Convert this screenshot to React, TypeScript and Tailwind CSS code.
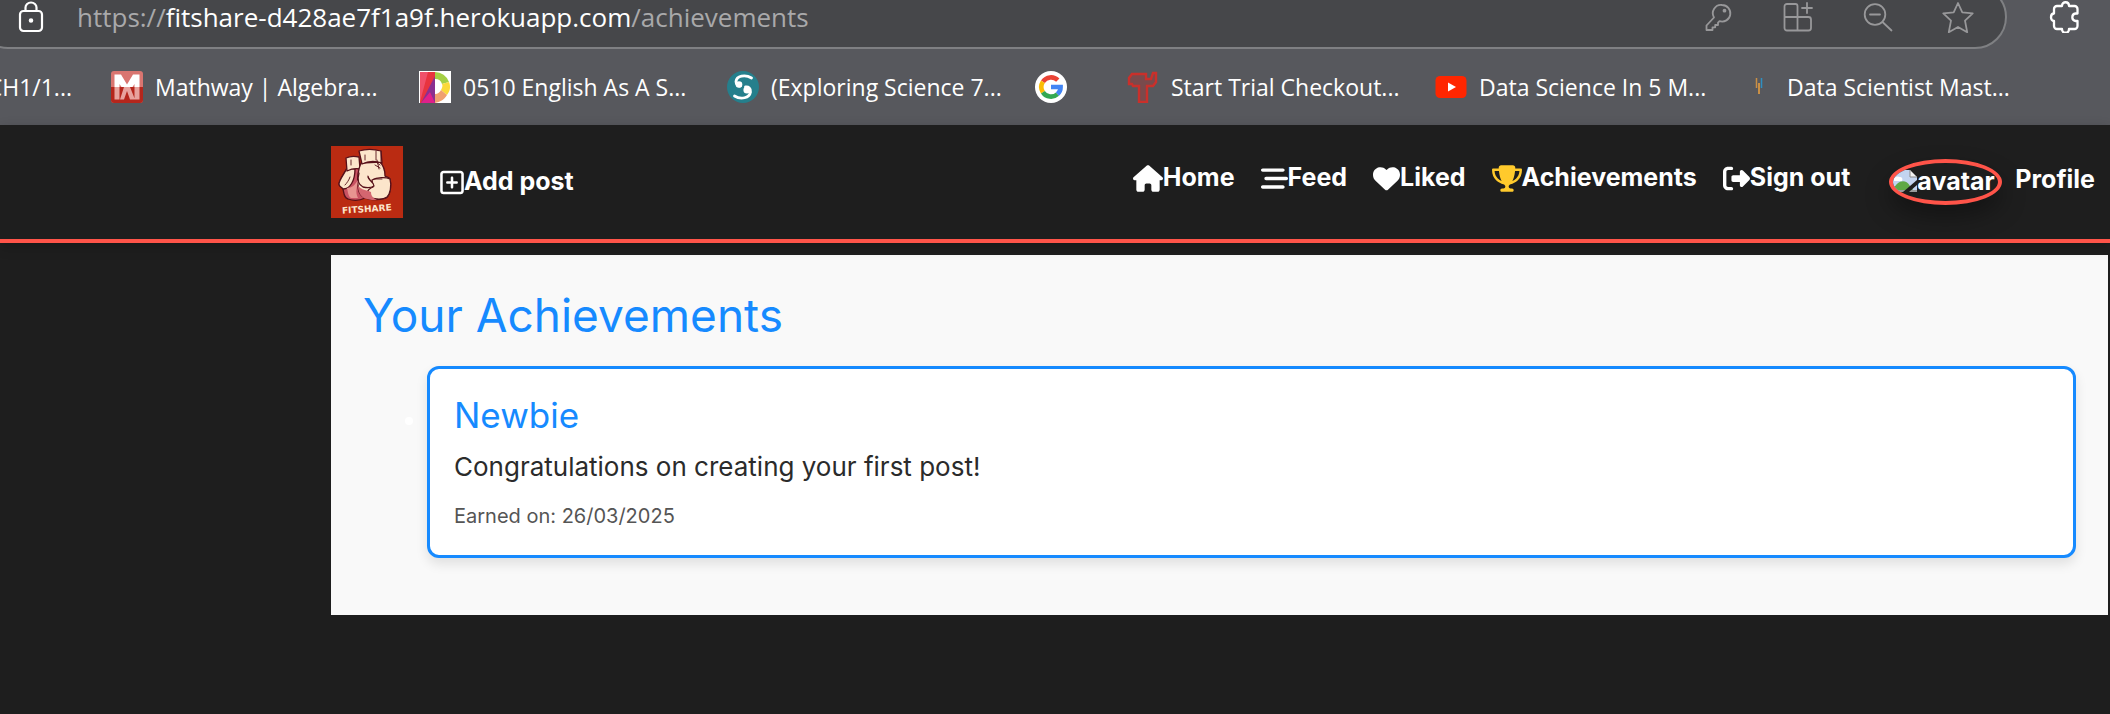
import type { ReactNode } from 'react';
import {
  FaBarsStaggered,
  FaHeart,
  FaHouse,
  FaRegSquarePlus,
  FaRightFromBracket,
  FaTrophy,
} from 'react-icons/fa6';

const stroke = {
  viewBox: '0 0 32 32',
  fill: 'none',
  stroke: 'currentColor',
  strokeWidth: 1.8,
  strokeLinejoin: 'round' as const,
  strokeLinecap: 'round' as const,
  className: 'size-8',
  'aria-hidden': true,
};

function LockIcon() {
  return (
    <svg {...stroke} strokeWidth={2.2}>
      <rect x="5" y="10" width="22" height="20" rx="3.5" />
      <path d="M10.500 10V6.500a5.500 5 0 0 1 11 0V10" />
      <circle cx="16" cy="19.500" r="1.200" fill="currentColor" />
    </svg>
  );
}

function KeyIcon() {
  return (
    <svg {...stroke}>
      <path d="M20 4a8.300 8.300 0 1 1-2.500 16.200L16 21.700V24h-2.800v2.300h-2.700V29H4.500v-4.500L12 16.500A8.300 8.300 0 0 1 20 4z" />
      <circle cx="22.500" cy="9.700" r="1" fill="currentColor" />
    </svg>
  );
}

function AppsAddIcon() {
  return (
    <svg {...stroke}>
      <path d="M5 3h8.500a2 2 0 0 1 2 2v11h11a2.500 2.500 0 0 1 2.500 2.500V27a2.500 2.500 0 0 1-2.500 2.500H5A2.500 2.500 0 0 1 2.500 27V5.500A2.500 2.500 0 0 1 5 3zM15.500 16v13.500M2.500 16h13M25 2v10M20 7h10" />
    </svg>
  );
}

function ZoomOutIcon() {
  return (
    <svg {...stroke}>
      <circle cx="13" cy="13.500" r="10.300" />
      <path d="M8 13.500h10M20.500 21l9 8.500" />
    </svg>
  );
}

function StarIcon() {
  return (
    <svg {...stroke}>
      <path d="M16 2l4.300 9.400 10.400 1-7.700 7.200 2.200 11.600L16 26l-9.200 5.200L9 19.600l-7.700-7.200 10.400-1z" />
    </svg>
  );
}

function PuzzleIcon() {
  return (
    <svg {...stroke} strokeWidth={2.3}>
      <path d="M8 5h5c0-5 7-5 7 0h5.500a3 3 0 0 1 3 3v4.500h-2a3.800 3.800 0 0 0 0 7.500h2v5a3 3 0 0 1-3 3H20c0 5-7 5-7 0H8a3 3 0 0 1-3-3v-5c-4 0-4-7.500 0-7.500V8a3 3 0 0 1 3-3z" />
    </svg>
  );
}

function MathwayIcon() {
  return (
    <svg viewBox="0 0 32 32" className="size-8" aria-hidden>
      <rect width="32" height="32" rx="3" fill="#d97570" />
      <path d="M0 16h32v13a3 3 0 0 1-3 3H3a3 3 0 0 1-3-3z" fill="#b5261c" />
      <path d="M3.500 16V3.500H10l6 10 6-10h6.500V16h-5v-3l-2 3h-11l-2-3v3z" fill="#fff" />
      <path d="M3.500 16h5v12.500h-5zM23.500 16h5v12.500h-5zM13 16h6l5 12.500h-5L16 20l-3 8.500H9z" fill="#e8a29d" />
    </svg>
  );
}

function EnglishIcon() {
  return (
    <svg viewBox="0 0 32 32" className="size-8" aria-hidden>
      <rect width="32" height="32" fill="#fff" />
      <path d="M1 1h15v31H1z" fill="#e8333f" />
      <path d="M1 31L9 1H1z" fill="#f0506a" />
      <path d="M16 5v27H2z" fill="#8a2f90" />
      <path d="M2 32l9-11 5 11z" fill="#e0208a" />
      <path d="M16 1a15 15 0 0 1 14 10l-7 2a7 7 0 0 0-7-5z" fill="#a5cf45" />
      <path d="M30 11c2 5 1 9-2 13l-6-5c1-2 2-4 1-6z" fill="#fbd93a" />
      <path d="M22 19l6 5c-3 5-7 7-12 8v-9c3 0 5-2 6-4z" fill="#f0a070" />
    </svg>
  );
}

function ScienceIcon() {
  return (
    <svg viewBox="0 0 32 32" className="size-8" aria-hidden>
      <circle cx="16" cy="16" r="16" fill="#257f8c" />
      <path
        d="M24.500 7C18 3 9.500 5 9 10.500c0 3 2 5 4.500 4.500M7.500 25c6.500 4 15 2 16-4 .5-3.500-2-5.500-5-5"
        fill="none"
        stroke="#fff"
        strokeWidth="2.800"
        strokeLinecap="round"
      />
      <circle cx="12" cy="13.500" r="3.300" fill="#fff" />
      <circle cx="20" cy="19" r="3.600" fill="#fff" />
    </svg>
  );
}

function GoogleIcon() {
  return (
    <svg viewBox="0 0 32 32" className="size-8" aria-hidden>
      <circle cx="16" cy="16" r="16" fill="#fff" />
      <g fill="none" strokeWidth="4.600">
        <path d="M22.800 9.200A9.600 9.600 0 0 0 7.900 10.800" stroke="#ea4335" />
        <path d="M7.900 10.800a9.600 9.600 0 0 0 0 10.400" stroke="#fbbc05" />
        <path d="M7.900 21.200a9.600 9.600 0 0 0 14.600 1.900" stroke="#34a853" />
        <path d="M22.500 23.100A9.600 9.600 0 0 0 25.600 16H16" stroke="#4285f4" />
      </g>
    </svg>
  );
}

function TrialIcon() {
  return (
    <svg viewBox="0 0 32 32" className="size-8" aria-hidden>
      <path
        d="M5 3h14v5h5l2-6h3v9l-3 4h-6v16h-8V15H6l-1-2H2V7z"
        fill="#7a4a4c"
        stroke="#c9302b"
        strokeWidth="2.400"
      />
    </svg>
  );
}

function VideoIcon() {
  return (
    <svg viewBox="0 0 32 32" className="size-8" aria-hidden>
      <rect x="0.500" y="5" width="31" height="22" rx="4.500" fill="#ff2600" />
      <path d="M13 11.500v9l8-4.500z" fill="#fff" />
    </svg>
  );
}

function BarsIcon() {
  return (
    <svg viewBox="0 0 32 32" className="size-8" aria-hidden>
      <path d="M13.500 7v10" stroke="#c98f45" strokeWidth="1.500" />
      <path d="M18.500 7v10" stroke="#2f8fc0" strokeWidth="1.500" />
      <path d="M16 12v11" stroke="#c98f45" strokeWidth="2" />
    </svg>
  );
}

function FitshareLogo() {
  return (
    <svg viewBox="0 0 72 72" className="size-[72px]" role="img" aria-label="Fitshare logo">
      <rect width="72" height="72" fill="#ba2b12" />
      <g stroke="#571019" strokeWidth="1.300" strokeLinejoin="round" strokeLinecap="round">
        <path
          d="M16 22c-2 5-8 12-8 16 0 3 3 3 4 5 1 5 1 9 5 10 6 2 13 1 17-1V24l-5-4z"
          fill="#c95262"
        />
        <path d="M16 22c-2 5-8 12-8 16 0 3 3 3 4 5 7 0 12-8 12-20z" fill="#fce5cb" />
        <path d="M15 12c4-2 9-2 13-1l1 12c-5-1-9 0-13 2z" fill="#fce5cb" />
        <path
          d="M30 17c-3 7-4 14-3 22 0 8 4 13 11 14 8 1 16 1 19-3 3-4 3-12 2-17-1-2-4-2-5-3 0-6-2-11-5-14z"
          fill="#fce5cb"
        />
        <path d="M28 5c6-2 15-2 22 0l1 12c-6-2-14-2-20 1z" fill="#fce5cb" />
        <path d="M41 34c5-3 14-3 18-1 2 7 0 15-3 18-4 3-12 2-17 1-4-4-4-8 3-11z" fill="#fce5cb" />
        <path d="M28 27c-2 7 0 12 4 14 4 1 8 1 11-1 0-4-5-5-6-9" fill="#fce5cb" />
        <path d="M40 46c-5-2-9-2-13-6 0 6 3 12 9 13 3 1 7 1 10 1-4-2-6-4-6-8z" fill="#d46670" stroke="none" />
        <path d="M16 42c1 4 1 8 4 10l7 0c-3-6-1-10 0-18-3 5-6 8-11 8z" fill="#e89490" stroke="none" />
        <path
          d="M19 31c-1 3-3 6-5 8M37 30c1 3 2 5 4 6M45 16l4 3M44 19l5 3M46 14l2 9M34 9v5M45 5v9M50 5v12M20 14v5M43 33h8"
          fill="none"
          strokeWidth="0.900"
        />
      </g>
      <text
        x="36"
        y="66"
        transform="rotate(-4 36 66)"
        textAnchor="middle"
        fill="#fce5cb"
        fontSize="9"
        fontWeight="900"
        fontFamily="DejaVu Sans, sans-serif"
      >
        FITSHARE
      </text>
    </svg>
  );
}

function BrokenImageIcon() {
  return (
    <svg viewBox="0 0 24 24" className="mb-1 size-6 shrink-0" aria-hidden>
      <path d="M0 2h17l7 7v15H0z" fill="#c3d4f0" />
      <path d="M17 2v7h7z" fill="#f2f2f2" stroke="#8a8a8a" />
      <path d="M1 11c1-3 4-3 6-2 2 0 3 2 2 4H1z" fill="#fff" />
      <path d="M0 22c4-9 12-12 17-4l3 4z" fill="#5fa845" />
      <path d="M0 23h24" stroke="#999" strokeWidth="2" />
      <path d="M10 24L24 12v5l-8 7z" fill="#1e1e1e" />
    </svg>
  );
}

type Bookmark = { label: string; icon: ReactNode };

const bookmarks: Bookmark[] = [
  { label: 'Mathway | Algebra...', icon: <MathwayIcon /> },
  { label: '0510 English As A S...', icon: <EnglishIcon /> },
  { label: '(Exploring Science 7...', icon: <ScienceIcon /> },
  { label: '', icon: <GoogleIcon /> },
  { label: 'Start Trial Checkout...', icon: <TrialIcon /> },
  { label: 'Data Science In 5 M...', icon: <VideoIcon /> },
  { label: 'Data Scientist Mast...', icon: <BarsIcon /> },
];

function BrowserBar() {
  return (
    <div className="overflow-hidden bg-[#57585d] font-['Open_Sans','Noto_Sans',sans-serif] text-white">
      <div className="flex">
        <div className="-mt-[15px] -ml-6 flex h-16 min-w-0 grow items-center rounded-full border-2 border-[#7f8083] bg-[#46474a] pr-[31px] pl-[37px]">
          <button type="button" aria-label="Site information">
            <LockIcon />
          </button>
          <div className="ml-[30px] min-w-0 grow text-[26px] leading-9 whitespace-nowrap text-[#a9a9aa]">
            https://<span className="text-white">fitshare-d428ae7f1a9f.herokuapp.com</span>/achievements
          </div>
          <div className="flex gap-12 text-[#98989a]">
            <button type="button" aria-label="Passwords">
              <KeyIcon />
            </button>
            <button type="button" aria-label="Install app">
              <AppsAddIcon />
            </button>
            <button type="button" aria-label="Zoom out">
              <ZoomOutIcon />
            </button>
            <button type="button" aria-label="Add to favourites">
              <StarIcon />
            </button>
          </div>
        </div>
        <button type="button" aria-label="Extensions" className="mt-px mr-[29px] ml-[42px] h-8">
          <PuzzleIcon />
        </button>
      </div>
      <nav aria-label="Bookmarks" className="flex h-[76px] items-center text-[23px] whitespace-nowrap">
        <a href="#ch1" className="mr-[39px] flex w-[72px] shrink-0 justify-end overflow-hidden">
          CH1/1...
        </a>
        {bookmarks.map(({ label, icon }) => (
          <a
            key={label}
            href="#bookmark"
            aria-label={label || 'Google'}
            className={
              label
                ? 'flex w-[308px] shrink-0 items-center gap-3'
                : 'flex w-[92px] shrink-0 items-center'
            }
          >
            {icon}
            {label && <span>{label}</span>}
          </a>
        ))}
      </nav>
    </div>
  );
}

const links = [
  { label: 'Home', icon: <FaHouse className="h-[27px] w-[30px]" /> },
  { label: 'Feed', icon: <FaBarsStaggered className="size-[27px]" /> },
  { label: 'Liked', icon: <FaHeart className="size-[27px]" /> },
  { label: 'Achievements', icon: <FaTrophy className="h-[27px] w-[30px] text-[#ffca2c]" /> },
  { label: 'Sign out', icon: <FaRightFromBracket className="size-[27px]" /> },
];

function SiteHeader() {
  return (
    <header className="relative flex h-[118px] items-center border-b-4 border-[#ff5449] bg-[#1e1e1e] pr-[15px] pl-[331px] text-[25px] font-bold text-white shadow-[0_4px_12px_rgba(0,0,0,0.2)]">
      <a href="#home" className="shrink-0">
        <FitshareLogo />
      </a>
      <a href="#add" className="ml-[37px] flex items-center">
        <FaRegSquarePlus className="h-[27px] w-6" />
        Add post
      </a>
      <nav className="mb-2 ml-auto flex items-center gap-[26px]">
        {links.map(({ label, icon }) => (
          <a key={label} href="#nav" className="flex items-center">
            {icon}
            {label}
          </a>
        ))}
      </nav>
      <a href="#profile" className="ml-[39px] flex items-center gap-[13px]">
        <span className="flex h-[46px] w-[113px] items-center overflow-hidden rounded-[50%] border-4 border-[#ff5449] shadow-[0_12px_24px_rgba(0,0,0,0.35)]">
          <BrokenImageIcon />
          avatar
        </span>
        <span className="mb-1">Profile</span>
      </a>
    </header>
  );
}

export default function App() {
  return (
    <div className="min-h-screen bg-[#1e1e1e] font-['Inter','Liberation_Sans',sans-serif]">
      <BrowserBar />
      <SiteHeader />
      <main className="mt-3 mr-0.5 ml-[331px] bg-[#f9f9f9] px-8 pt-[30px] pb-[57px]">
        <h1 className="text-[46px] leading-[60px] font-normal text-[#168aff]">Your Achievements</h1>
        <ul className="mt-[21px] list-disc pl-16 text-2xl text-white">
          <li className="rounded-xl border-3 border-[#168aff] bg-white p-6 shadow-[0_6px_12px_rgba(0,0,0,0.1)]">
            <h2 className="text-[35px] leading-11 text-[#168aff]">Newbie</h2>
            <p className="mt-3 text-[26px] leading-9 text-[#2b2b2b]">
              Congratulations on creating your first post!
            </p>
            <p className="mt-4 text-xl leading-[30px] text-[#555]">Earned on: 26/03/2025</p>
          </li>
        </ul>
      </main>
    </div>
  );
}
